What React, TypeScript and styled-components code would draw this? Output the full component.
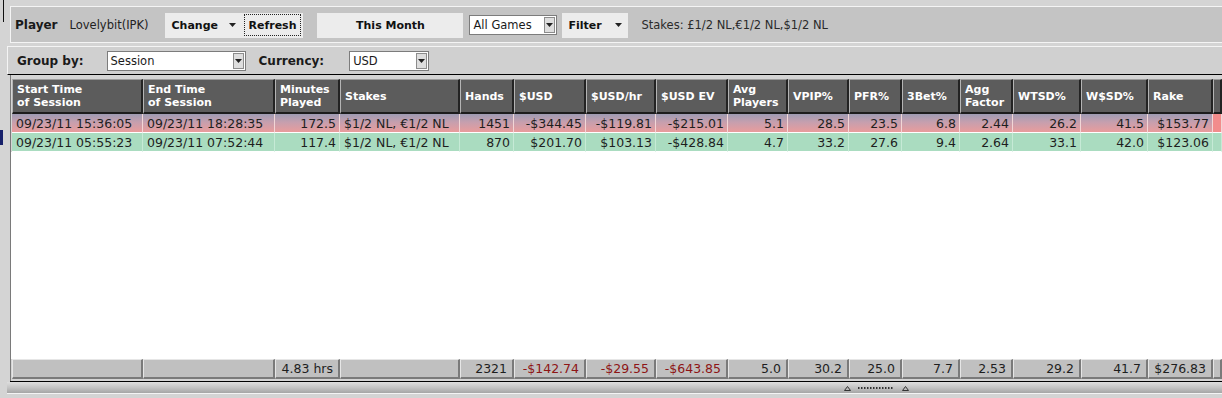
import styled, { createGlobalStyle } from "styled-components";

const GlobalStyle = createGlobalStyle`
  html, body {
    margin: 0;
    padding: 0;
    background: #d4d4d4;
  }
  body {
    font-family: "DejaVu Sans", Verdana, sans-serif;
    color: #1a1a1a;
  }
`;

const COLS =
  "131px 132px 65px 120px 54px 72px 70px 72px 60px 61px 53px 58px 53px 68px 67px 65px 1fr";

const Screen = styled.div`
  width: 1222px;
  height: 398px;
  overflow: hidden;
  display: flex;
  background: #d4d4d4;
`;

const Gutter = styled.div`
  width: 7px;
  flex: none;
  display: flex;
  flex-direction: column;
`;

const GutterStub = styled.div`
  width: 3px;
  height: 22px;
  border-right: 1px solid #111;
`;

const GutterMark = styled.div`
  margin-top: 108px;
  width: 3px;
  height: 15px;
  background: #17206a;
`;

const Main = styled.div`
  flex: 1;
  min-width: 0;
  display: flex;
  flex-direction: column;
`;

const TopBar = styled.div`
  margin: 6px 0 0 3px;
  height: 35px;
  background: #c4c4c4;
  border: 1px solid #f4f4f4;
  border-right: none;
  display: flex;
  align-items: center;
  padding: 1px 0 0 4px;
  box-sizing: border-box;
  height: 37px;
  font-size: 11px;
`;

const BarLabel = styled.span<{ $ml?: number }>`
  margin-left: ${(p) => p.$ml ?? 0}px;
  font-weight: bold;
  font-size: 12px;
  color: #1a1a1a;
`;

const PlayerName = styled.span`
  margin-left: 12px;
  font-size: 11.5px;
  color: #222;
`;

const ButtonGroup = styled.div`
  margin-left: 17px;
  height: 25px;
  display: flex;
  align-items: center;
  background: #ececec;
  padding-right: 2px;
`;

const ToolButton = styled.div<{ $width: number; $center?: boolean; $focused?: boolean; $ml?: number }>`
  width: ${(p) => p.$width}px;
  margin-left: ${(p) => p.$ml ?? 0}px;
  height: ${(p) => (p.$focused ? "22px" : "25px")};
  box-sizing: border-box;
  display: flex;
  align-items: center;
  justify-content: ${(p) => (p.$center ? "center" : "space-between")};
  padding: 0 ${(p) => (p.$focused ? 3 : 6)}px;
  background: #ececec;
  border: ${(p) => (p.$focused ? "1px dotted #222" : "none")};
  font-weight: bold;
  font-size: 11px;
  color: #111;
`;

const Select = styled.div<{ $width: number; $ml: number }>`
  width: ${(p) => p.$width}px;
  margin-left: ${(p) => p.$ml}px;
  height: 20px;
  box-sizing: border-box;
  display: flex;
  align-items: center;
  background: #fff;
  border: 1px solid #7c7c7c;
  font-size: 11.5px;
  color: #1a1a1a;
`;

const SelectText = styled.span`
  flex: 1;
  padding-left: 3px;
`;

const SelectArrow = styled.div`
  width: 11px;
  height: 16px;
  margin-right: 1px;
  display: flex;
  align-items: center;
  justify-content: center;
  background: #dedede;
  border: 1px solid #8c8c8c;
  box-sizing: border-box;
`;

const StakesInfo = styled.span`
  margin-left: 13px;
  font-size: 11.5px;
  color: #2a2a2a;
`;

const GroupBar = styled.div`
  margin-top: 3px;
  height: 27px;
  background: #d0d0d0;
  border-top: 1px solid #f4f4f4;
  border-left: 1px solid #f4f4f4;
  border-bottom: 1px solid #000;
  display: flex;
  align-items: center;
  padding-left: 9px;
`;

const TableFrame = styled.div`
  margin-left: 3px;
  height: 306px;
  display: flex;
  flex-direction: column;
  border-left: 1px solid #7a7a7a;
  box-sizing: border-box;
`;

const TopGap = styled.div`
  height: 4px;
  flex: none;
`;

const Row = styled.div<{ $height: number }>`
  display: grid;
  grid-template-columns: ${COLS};
  height: ${(p) => p.$height}px;
  padding-left: 1px;
  flex: none;
`;

const HeadCell = styled.div`
  box-sizing: border-box;
  display: flex;
  align-items: center;
  padding-left: 4px;
  background: #5c5c5c;
  border-top: 1px solid #9c9c9c;
  border-left: 1px solid #b4b4b4;
  border-right: 2px solid #232323;
  border-bottom: 2px solid #1c1c1c;
  color: #fff;
  font-weight: bold;
  font-size: 11px;
  line-height: 13px;
  white-space: nowrap;
`;

type Tone = "loss" | "win";

const rowBg = (t: Tone) =>
  t === "loss"
    ? "linear-gradient(to bottom, #9e9bb3 0%, #c69fae 45%, #e99c9c 100%)"
    : "#aadcc0";

const DataCell = styled.div<{ $tone: Tone; $right?: boolean; $tail?: boolean }>`
  box-sizing: border-box;
  display: flex;
  align-items: center;
  justify-content: ${(p) => (p.$right ? "flex-end" : "flex-start")};
  padding: 0 3px 0 4px;
  background: ${(p) => (p.$tail ? (p.$tone === "loss" ? "#f28c8c" : "#aadcc0") : rowBg(p.$tone))};
  border-right: 1px solid ${(p) => (p.$tone === "loss" ? "#f2d6d6" : "#c6ead6")};
  border-bottom: 1px solid #fff;
  font-size: 12.5px;
  color: #1e1e1e;
  white-space: nowrap;
`;

const EmptyArea = styled.div`
  flex: 1;
  background: #fff;
`;

const FootCell = styled.div<{ $neg?: boolean }>`
  box-sizing: border-box;
  display: flex;
  align-items: center;
  justify-content: flex-end;
  padding-right: 5px;
  background: #c0c0c0;
  border-top: 1px solid #e6e6e6;
  border-left: 1px solid #e6e6e6;
  border-right: 2px solid #7a7a7a;
  border-bottom: 2px solid #7a7a7a;
  font-size: 12.5px;
  color: ${(p) => (p.$neg ? "#8e1515" : "#1e1e1e")};
  white-space: nowrap;
`;

const FootGap = styled.div`
  height: 2px;
  flex: none;
  background: #d4d4d4;
`;

const BlackLine = styled.div`
  height: 1px;
  background: #000;
  margin-left: 3px;
`;

const Splitter = styled.div`
  height: 11px;
  background: linear-gradient(to bottom, #dedede 0%, #c4c4c4 50%, #a6a6a6 100%);
  border-bottom: 1px solid #f4f4f4;
  display: flex;
  align-items: center;
  padding-left: 837px;
`;

const Bottom = styled.div`
  flex: 1;
  background: #d4d4d4;
`;

const DownArrow = () => (
  <svg width="7" height="4" viewBox="0 0 7 4">
    <path d="M0 0h7L3.5 4z" fill="#222" />
  </svg>
);

const SplitGrip = () => (
  <svg width="66" height="6" viewBox="0 0 66 6">
    <path d="M0.5 5.5L3.5 1.5L6.5 5.5Z" fill="#bbb" stroke="#333" strokeWidth="1" />
    {Array.from({ length: 12 }).map((_, i) => (
      <rect key={i} x={14 + i * 3} y={2} width={1.5} height={2} fill="#333" />
    ))}
    <path d="M58.5 5.5L61.5 1.5L64.5 5.5Z" fill="#bbb" stroke="#333" strokeWidth="1" />
  </svg>
);

const headers: string[][] = [
  ["Start Time", "of Session"],
  ["End Time", "of Session"],
  ["Minutes", "Played"],
  ["Stakes"],
  ["Hands"],
  ["$USD"],
  ["$USD/hr"],
  ["$USD EV"],
  ["Avg", "Players"],
  ["VPIP%"],
  ["PFR%"],
  ["3Bet%"],
  ["Agg", "Factor"],
  ["WTSD%"],
  ["W$SD%"],
  ["Rake"],
  [""],
];

const leftCols = [0, 1, 3];

const sessions: { tone: Tone; cells: string[] }[] = [
  {
    tone: "loss",
    cells: [
      "09/23/11 15:36:05",
      "09/23/11 18:28:35",
      "172.5",
      "$1/2 NL, €1/2 NL",
      "1451",
      "-$344.45",
      "-$119.81",
      "-$215.01",
      "5.1",
      "28.5",
      "23.5",
      "6.8",
      "2.44",
      "26.2",
      "41.5",
      "$153.77",
      "",
    ],
  },
  {
    tone: "win",
    cells: [
      "09/23/11 05:55:23",
      "09/23/11 07:52:44",
      "117.4",
      "$1/2 NL, €1/2 NL",
      "870",
      "$201.70",
      "$103.13",
      "-$428.84",
      "4.7",
      "33.2",
      "27.6",
      "9.4",
      "2.64",
      "33.1",
      "42.0",
      "$123.06",
      "",
    ],
  },
];

const totals = [
  "",
  "",
  "4.83 hrs",
  "",
  "2321",
  "-$142.74",
  "-$29.55",
  "-$643.85",
  "5.0",
  "30.2",
  "25.0",
  "7.7",
  "2.53",
  "29.2",
  "41.7",
  "$276.83",
  "",
];

const App = () => {
  return (
    <>
      <GlobalStyle />
      <Screen>
        <Gutter>
          <GutterStub />
          <GutterMark />
        </Gutter>
        <Main>
          <TopBar>
            <BarLabel>Player</BarLabel>
            <PlayerName>Lovelybit(IPK)</PlayerName>
            <ButtonGroup>
              <ToolButton $width={77}>
                Change <DownArrow />
              </ToolButton>
              <ToolButton $width={57} $focused $ml={2}>
                Refresh
              </ToolButton>
            </ButtonGroup>
            <ToolButton $width={146} $center $ml={14}>
              This Month
            </ToolButton>
            <Select $width={88} $ml={6}>
              <SelectText>All Games</SelectText>
              <SelectArrow>
                <DownArrow />
              </SelectArrow>
            </Select>
            <ToolButton $width={66} $ml={5}>
              Filter <DownArrow />
            </ToolButton>
            <StakesInfo>Stakes: £1/2 NL,€1/2 NL,$1/2 NL</StakesInfo>
          </TopBar>

          <GroupBar>
            <BarLabel>Group by:</BarLabel>
            <Select $width={139} $ml={23}>
              <SelectText>Session</SelectText>
              <SelectArrow>
                <DownArrow />
              </SelectArrow>
            </Select>
            <BarLabel $ml={13}>Currency:</BarLabel>
            <Select $width={80} $ml={25}>
              <SelectText>USD</SelectText>
              <SelectArrow>
                <DownArrow />
              </SelectArrow>
            </Select>
          </GroupBar>

          <TableFrame>
            <TopGap />
            <Row $height={35}>
              {headers.map((h, i) => (
                <HeadCell key={i}>
                  <div>
                    {h.map((line, j) => (
                      <div key={j}>{line}</div>
                    ))}
                  </div>
                </HeadCell>
              ))}
            </Row>
            {sessions.map((s, r) => (
              <Row $height={19} key={r}>
                {s.cells.map((c, i) => (
                  <DataCell
                    key={i}
                    $tone={s.tone}
                    $right={!leftCols.includes(i)}
                    $tail={i === s.cells.length - 1}
                  >
                    {c}
                  </DataCell>
                ))}
              </Row>
            ))}
            <EmptyArea />
            <Row $height={20}>
              {totals.map((t, i) => (
                <FootCell key={i} $neg={t.startsWith("-")}>
                  {t}
                </FootCell>
              ))}
            </Row>
            <FootGap />
          </TableFrame>
          <BlackLine />
          <Splitter>
            <SplitGrip />
          </Splitter>
          <Bottom />
        </Main>
      </Screen>
    </>
  );
};

export default App;
